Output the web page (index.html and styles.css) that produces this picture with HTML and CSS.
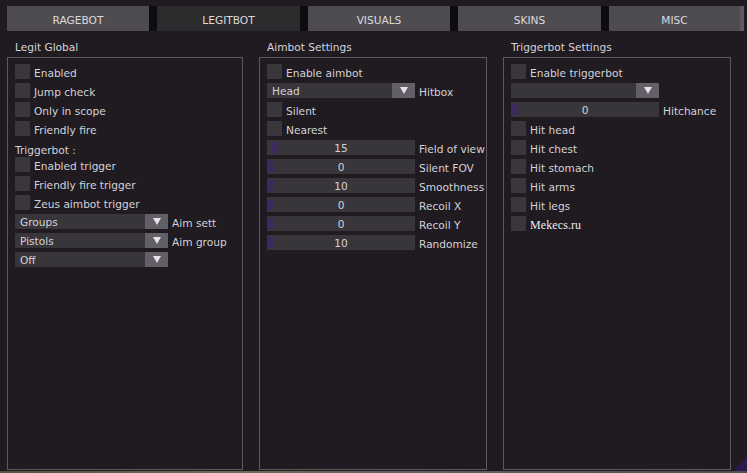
FILE: index.html
```html
<!DOCTYPE html>
<html lang="en">
<head>
  <meta charset="UTF-8">
  <title>Legitbot</title>
  <link rel="stylesheet" href="styles.css">
</head>
<body>

  <!-- Tabs -->
  <div class="tabs">
    <div class="tab">RAGEBOT</div>
    <div class="tab active">LEGITBOT</div>
    <div class="tab">VISUALS</div>
    <div class="tab">SKINS</div>
    <div class="tab last">MISC</div>
    <div class="tab-edge"></div>
  </div>

  <div class="columns">

    <!-- Legit Global -->
    <div class="column wide">
      <div class="col-title">Legit Global</div>
      <div class="box">
        <div class="row"><span class="check"></span><span class="label">Enabled</span></div>
        <div class="row"><span class="check"></span><span class="label">Jump check</span></div>
        <div class="row"><span class="check"></span><span class="label">Only in scope</span></div>
        <div class="row"><span class="check"></span><span class="label">Friendly fire</span></div>
        <div class="row heading">Triggerbot :</div>
        <div class="row"><span class="check"></span><span class="label">Enabled trigger</span></div>
        <div class="row"><span class="check"></span><span class="label">Friendly fire trigger</span></div>
        <div class="row"><span class="check"></span><span class="label">Zeus aimbot trigger</span></div>
        <div class="row">
          <div class="combo long"><span class="combo-text">Groups</span><span class="arrow"></span></div>
          <span class="label">Aim sett</span>
        </div>
        <div class="row">
          <div class="combo long"><span class="combo-text">Pistols</span><span class="arrow"></span></div>
          <span class="label">Aim group</span>
        </div>
        <div class="row">
          <div class="combo long"><span class="combo-text">Off</span><span class="arrow"></span></div>
        </div>
      </div>
    </div>

    <!-- Aimbot Settings -->
    <div class="column">
      <div class="col-title">Aimbot Settings</div>
      <div class="box">
        <div class="row"><span class="check"></span><span class="label">Enable aimbot</span></div>
        <div class="row">
          <div class="combo"><span class="combo-text">Head</span><span class="arrow"></span></div>
          <span class="label">Hitbox</span>
        </div>
        <div class="row"><span class="check"></span><span class="label">Silent</span></div>
        <div class="row"><span class="check"></span><span class="label">Nearest</span></div>
        <div class="row">
          <div class="slider"><span class="thumb" style="left: 5px"></span><span class="value">15</span></div>
          <span class="label">Field of view</span>
        </div>
        <div class="row">
          <div class="slider"><span class="thumb"></span><span class="value">0</span></div>
          <span class="label">Silent FOV</span>
        </div>
        <div class="row">
          <div class="slider"><span class="thumb"></span><span class="value">10</span></div>
          <span class="label">Smoothness</span>
        </div>
        <div class="row">
          <div class="slider"><span class="thumb"></span><span class="value">0</span></div>
          <span class="label">Recoil X</span>
        </div>
        <div class="row">
          <div class="slider"><span class="thumb"></span><span class="value">0</span></div>
          <span class="label">Recoil Y</span>
        </div>
        <div class="row">
          <div class="slider"><span class="thumb"></span><span class="value">10</span></div>
          <span class="label">Randomize</span>
        </div>
      </div>
    </div>

    <!-- Triggerbot Settings -->
    <div class="column">
      <div class="col-title">Triggerbot Settings</div>
      <div class="box">
        <div class="row"><span class="check"></span><span class="label">Enable triggerbot</span></div>
        <div class="row">
          <div class="combo"><span class="combo-text"></span><span class="arrow"></span></div>
        </div>
        <div class="row">
          <div class="slider"><span class="thumb"></span><span class="value">0</span></div>
          <span class="label">Hitchance</span>
        </div>
        <div class="row"><span class="check"></span><span class="label">Hit head</span></div>
        <div class="row"><span class="check"></span><span class="label">Hit chest</span></div>
        <div class="row"><span class="check"></span><span class="label">Hit stomach</span></div>
        <div class="row"><span class="check"></span><span class="label">Hit arms</span></div>
        <div class="row"><span class="check"></span><span class="label">Hit legs</span></div>
        <div class="row"><span class="check"></span><span class="label brand">Mekecs.ru</span></div>
      </div>
    </div>

  </div>

  <div class="screen-edge"></div>
  <div class="grip"></div>

</body>
</html>
```
FILE: styles.css
```css
body {
  margin: 0;
  padding: 0;
  width: 747px;
  height: 473px;
  overflow: hidden;
  position: relative;
  background-color: #1f1b21;
  color: #d4d2d6;
  font-family: "DejaVu Sans", Verdana, sans-serif;
  font-size: 10.6px;
}

/* Tabs */
.tabs {
  display: flex;
  gap: 8px;
  margin: 6px 0 0 7px;
  width: 737px;
  height: 25px;
  background-color: #0e0c0f;
}

.tab {
  width: 142px;
  display: flex;
  align-items: center;
  justify-content: center;
  padding-top: 2px;
  box-sizing: border-box;
  background-color: #4e4c51;
  color: #dcdadf;
}

.tab:nth-child(2n) {
  width: 143px;
}

.tab.active {
  background-color: #2c2b2d;
}

.tab.last {
  width: 131px;
}

.tab-edge {
  width: 4px;
  margin-left: -8px;
  background-color: #5e5c62;
}

/* Columns */
.columns {
  display: flex;
  gap: 16px;
  margin: 6px 0 0 7px;
}

.column {
  width: 228px;
}

.column.wide {
  width: 236px;
}

.col-title {
  height: 20px;
  line-height: 20px;
  padding-left: 8px;
  color: #d6d4d8;
}

.box {
  height: 405px;
  border: 1px solid #5b585e;
  padding: 6px 0 0 7px;
  overflow: hidden;
}

.row {
  display: flex;
  align-items: center;
  height: 15px;
  margin-bottom: 4px;
  white-space: nowrap;
}

.row.heading {
  height: 13px;
  padding-top: 3px;
  margin-bottom: 1px;
}

.check {
  flex: none;
  width: 15px;
  height: 15px;
  background-color: #39373b;
}

.label {
  margin-left: 4px;
  flex: none;
  position: relative;
  top: 1px;
}

.brand {
  font-family: "Liberation Serif", "Times New Roman", serif;
  font-size: 12px;
  color: #ecebef;
  letter-spacing: 0.1px;
  top: 2px;
}

/* Combo boxes */
.combo {
  flex: none;
  display: flex;
  width: 148px;
  height: 15px;
  background-color: #38363a;
}

.combo.long {
  width: 153px;
}

.combo-text {
  flex: 1;
  padding-left: 5px;
  line-height: 15px;
  position: relative;
  top: 1px;
}

.arrow {
  width: 23px;
  height: 15px;
  background-color: #625f66;
  position: relative;
}

.arrow::after {
  content: "";
  position: absolute;
  left: 8px;
  top: 4px;
  border-left: 4px solid transparent;
  border-right: 4px solid transparent;
  border-top: 7px solid #e6e1ec;
}

/* Sliders */
.slider {
  flex: none;
  position: relative;
  width: 148px;
  height: 15px;
  background-color: #38363a;
  text-align: center;
  line-height: 15px;
}

.thumb {
  position: absolute;
  left: 1px;
  top: 2px;
  width: 6px;
  height: 11px;
  background-color: #3b2960;
}

.value {
  position: relative;
  top: 1px;
}

/* Screen bottom */
.screen-edge {
  position: absolute;
  left: 0;
  bottom: 0;
  width: 747px;
  height: 2px;
  background: linear-gradient(to right, #55533f, #6e6c58 30%, #5c6060 60%, #49504f);
}

.grip {
  position: absolute;
  right: 0;
  bottom: 2px;
  width: 0;
  height: 0;
  border-left: 14px solid transparent;
  border-bottom: 14px solid #2b1a4c;
}
```
